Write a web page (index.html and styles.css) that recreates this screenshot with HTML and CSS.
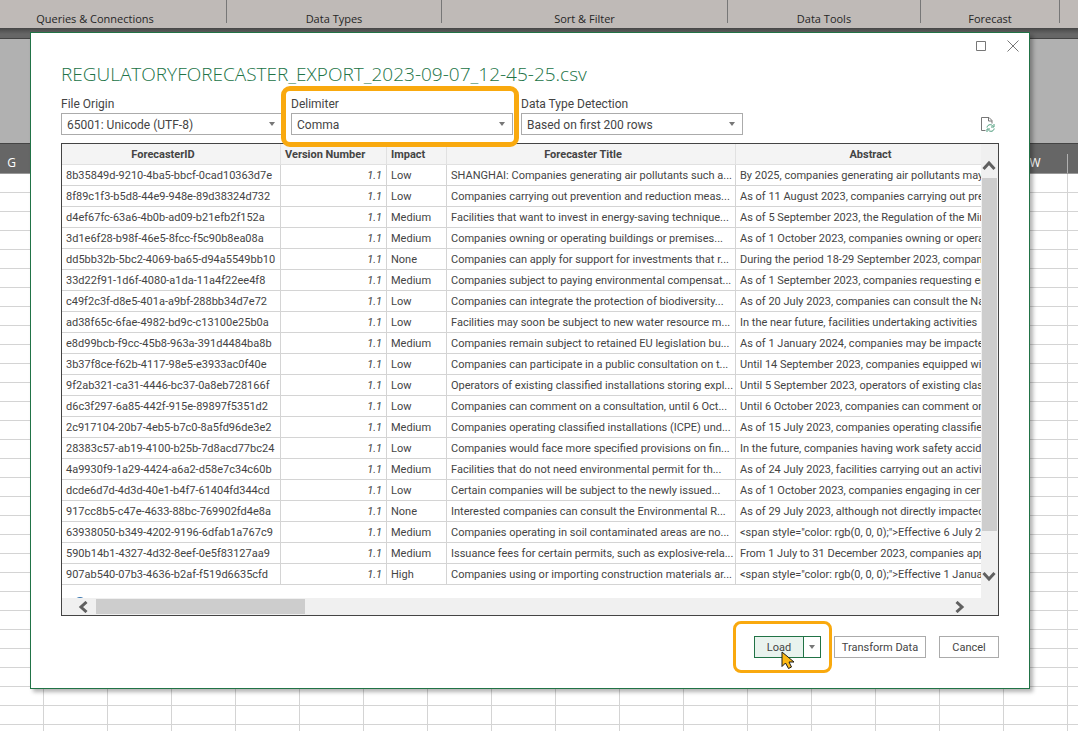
FILE: index.html
```html
<!DOCTYPE html>
<html lang="en">
<head>
  <meta charset="UTF-8">
  <title>CSV Import</title>
  <link rel="stylesheet" href="styles.css">
</head>
<body>
  <div class="workbook">
    <div class="ribbon">
      <div class="ribbon-group queries">Queries &amp; Connections</div>
      <div class="ribbon-group types">Data Types</div>
      <div class="ribbon-group sort">Sort &amp; Filter</div>
      <div class="ribbon-group tools">Data Tools</div>
      <div class="ribbon-group forecast">Forecast</div>
    </div>
    <div class="ribbon-edge"></div>
    <div class="formula-area"></div>
    <div class="column-heads">
      <span class="column-head first">G</span>
      <span class="column-head last">W</span>
    </div>
    <div class="cells"></div>
  </div>

  <main class="dialog">
    <div class="window-buttons">
      <button type="button" aria-label="Maximize">
        <svg width="12" height="12" viewBox="0 0 12 12"><path d="M1.500 1.500h9v9h-9z"/></svg>
      </button>
      <button type="button" aria-label="Close">
        <svg width="12" height="12" viewBox="0 0 12 12"><path d="M.5.5l11 11M11.500.5l-11 11"/></svg>
      </button>
    </div>

    <h1>REGULATORYFORECASTER_EXPORT_2023-09-07_12-45-25.csv</h1>

    <div class="options">
      <div class="field">
        <label for="origin">File Origin</label>
        <div class="select-box">
          <select id="origin"><option>65001: Unicode (UTF-8)</option></select>
        </div>
      </div>
      <div class="field highlighted">
        <label for="delimiter">Delimiter</label>
        <div class="select-box">
          <select id="delimiter"><option>Comma</option></select>
        </div>
      </div>
      <div class="field">
        <label for="detection">Data Type Detection</label>
        <div class="select-box">
          <select id="detection"><option>Based on first 200 rows</option></select>
        </div>
      </div>
      <button type="button" class="refresh" aria-label="Refresh preview">
        <svg width="16" height="17" viewBox="0 0 16 17">
          <path class="page" d="M5.500 14.500h-4V1.500h7.500l3 3v3M8.500 1.500v3.500h3.500"/>
          <path class="arrows" d="M7 11.500c.5-2 1.500-2.800 3.300-2.800 1.200 0 2 .5 2.700 1.500M14 8v3h-3M14.200 12.500c-.5 2-1.500 2.800-3.300 2.800-1.200 0-2-.5-2.700-1.500M7 16v-3h3"/>
        </svg>
      </button>
    </div>

    <div class="preview">
      <div class="table-view">
        <table>
          <colgroup>
            <col class="col-id"><col class="col-version"><col class="col-impact"><col class="col-title"><col>
          </colgroup>
          <thead>
            <tr><th>ForecasterID</th><th class="left">Version Number</th><th class="left">Impact</th><th>Forecaster Title</th><th class="abstract">Abstract</th></tr>
          </thead>
          <tbody>
            <tr><td>8b35849d-9210-4ba5-bbcf-0cad10363d7e</td><td class="num">1.1</td><td>Low</td><td>SHANGHAI: Companies generating air pollutants such a...</td><td>By 2025, companies generating air pollutants may</td></tr>
            <tr><td>8f89c1f3-b5d8-44e9-948e-89d38324d732</td><td class="num">1.1</td><td>Low</td><td>Companies carrying out prevention and reduction meas...</td><td>As of 11 August 2023, companies carrying out prevention</td></tr>
            <tr><td>d4ef67fc-63a6-4b0b-ad09-b21efb2f152a</td><td class="num">1.1</td><td>Medium</td><td>Facilities that want to invest in energy-saving technique...</td><td>As of 5 September 2023, the Regulation of the Ministry</td></tr>
            <tr><td>3d1e6f28-b98f-46e5-8fcc-f5c90b8ea08a</td><td class="num">1.1</td><td>Medium</td><td>Companies owning or operating buildings or premises...</td><td>As of 1 October 2023, companies owning or operating</td></tr>
            <tr><td>dd5bb32b-5bc2-4069-ba65-d94a5549bb10</td><td class="num">1.1</td><td>None</td><td>Companies can apply for support for investments that r...</td><td>During the period 18-29 September 2023, companies</td></tr>
            <tr><td>33d22f91-1d6f-4080-a1da-11a4f22ee4f8</td><td class="num">1.1</td><td>Medium</td><td>Companies subject to paying environmental compensat...</td><td>As of 1 September 2023, companies requesting environmental</td></tr>
            <tr><td>c49f2c3f-d8e5-401a-a9bf-288bb34d7e72</td><td class="num">1.1</td><td>Low</td><td>Companies can integrate the protection of biodiversity...</td><td>As of 20 July 2023, companies can consult the National</td></tr>
            <tr><td>ad38f65c-6fae-4982-bd9c-c13100e25b0a</td><td class="num">1.1</td><td>Low</td><td>Facilities may soon be subject to new water resource m...</td><td>In the near future, facilities undertaking activities</td></tr>
            <tr><td>e8d99bcb-f9cc-45b8-963a-391d4484ba8b</td><td class="num">1.1</td><td>Medium</td><td>Companies remain subject to retained EU legislation bu...</td><td>As of 1 January 2024, companies may be impacted</td></tr>
            <tr><td>3b37f8ce-f62b-4117-98e5-e3933ac0f40e</td><td class="num">1.1</td><td>Low</td><td>Companies can participate in a public consultation on t...</td><td>Until 14 September 2023, companies equipped with</td></tr>
            <tr><td>9f2ab321-ca31-4446-bc37-0a8eb728166f</td><td class="num">1.1</td><td>Low</td><td>Operators of existing classified installations storing expl...</td><td>Until 5 September 2023, operators of existing classified</td></tr>
            <tr><td>d6c3f297-6a85-442f-915e-89897f5351d2</td><td class="num">1.1</td><td>Low</td><td>Companies can comment on a consultation, until 6 Oct...</td><td>Until 6 October 2023, companies can comment on</td></tr>
            <tr><td>2c917104-20b7-4eb5-b7c0-8a5fd96de3e2</td><td class="num">1.1</td><td>Medium</td><td>Companies operating classified installations (ICPE) und...</td><td>As of 15 July 2023, companies operating classified</td></tr>
            <tr><td>28383c57-ab19-4100-b25b-7d8acd77bc24</td><td class="num">1.1</td><td>Low</td><td>Companies would face more specified provisions on fin...</td><td>In the future, companies having work safety accidents</td></tr>
            <tr><td>4a9930f9-1a29-4424-a6a2-d58e7c34c60b</td><td class="num">1.1</td><td>Medium</td><td>Facilities that do not need environmental permit for th...</td><td>As of 24 July 2023, facilities carrying out an activity</td></tr>
            <tr><td>dcde6d7d-4d3d-40e1-b4f7-61404fd344cd</td><td class="num">1.1</td><td>Low</td><td>Certain companies will be subject to the newly issued...</td><td>As of 1 October 2023, companies engaging in certain</td></tr>
            <tr><td>917cc8b5-c47e-4633-88bc-769902fd4e8a</td><td class="num">1.1</td><td>None</td><td>Interested companies can consult the Environmental R...</td><td>As of 29 July 2023, although not directly impacted</td></tr>
            <tr><td>63938050-b349-4202-9196-6dfab1a767c9</td><td class="num">1.1</td><td>Medium</td><td>Companies operating in soil contaminated areas are no...</td><td>&lt;span style="color: rgb(0, 0, 0);"&gt;Effective 6 July 2023</td></tr>
            <tr><td>590b14b1-4327-4d32-8eef-0e5f83127aa9</td><td class="num">1.1</td><td>Medium</td><td>Issuance fees for certain permits, such as explosive-rela...</td><td>From 1 July to 31 December 2023, companies applying</td></tr>
            <tr><td>907ab540-07b3-4636-b2af-f519d6635cfd</td><td class="num">1.1</td><td>High</td><td>Companies using or importing construction materials ar...</td><td>&lt;span style="color: rgb(0, 0, 0);"&gt;Effective 1 January</td></tr>
          </tbody>
        </table>
        <div class="info-peek"></div>
      </div>

      <div class="scroll-v">
        <button type="button" aria-label="Scroll up">
          <svg width="14" height="11" viewBox="0 0 14 11"><path d="M1.500 9L7 3l5.500 6"/></svg>
        </button>
        <div class="thumb"></div>
        <button type="button" aria-label="Scroll down">
          <svg width="14" height="11" viewBox="0 0 14 11"><path d="M1.500 2L7 8l5.500-6"/></svg>
        </button>
      </div>

      <div class="scroll-h">
        <button type="button" aria-label="Scroll left">
          <svg width="10" height="12" viewBox="0 0 10 12"><path d="M8.500 1L3 6l5.500 5"/></svg>
        </button>
        <div class="thumb"></div>
        <button type="button" aria-label="Scroll right">
          <svg width="10" height="12" viewBox="0 0 10 12"><path d="M1.500 1L7 6l-5.500 5"/></svg>
        </button>
      </div>
    </div>

    <div class="actions">
      <div class="split-button">
        <button type="button" class="load">Load</button>
        <button type="button" class="load-menu" aria-label="Load options"></button>
        <svg class="pointer" width="15" height="19" viewBox="0 0 15 19">
          <path d="M1 1v14.500l3.500-3.500 3 5.500 3-1.500-2.500-5H13z"/>
        </svg>
      </div>
      <button type="button" class="transform">Transform Data</button>
      <button type="button" class="cancel">Cancel</button>
    </div>
  </main>
</body>
</html>
```
FILE: styles.css
```css
* {
  box-sizing: border-box;
}
body {
  margin: 0;
  font-family: "Open Sans", "Noto Sans", sans-serif;
  font-size: 11px;
  color: #444;
  background: #fff;
}
button {
  padding: 0;
  font: inherit;
  color: inherit;
  background: #fff;
  border: 1px solid #ababab;
}

/* Spreadsheet behind the dialog */
.workbook {
  display: flex;
  flex-direction: column;
  height: 100vh;
  overflow: hidden;
}
.ribbon {
  display: flex;
  flex: none;
  height: 28px;
  padding-bottom: 5px;
  background: #bfbab7;
}
.ribbon-group {
  flex: none;
  padding-top: 11px;
  line-height: 16px;
  text-align: center;
  color: #262626;
  border-right: 1px solid #777;
}
.queries {
  width: 227px;
  padding-right: 36px;
}
.types {
  width: 215px;
}
.sort {
  width: 286px;
}
.tools {
  width: 193px;
}
.forecast {
  width: 139px;
}
.ribbon-edge {
  flex: none;
  height: 11px;
  background: linear-gradient(#464646, #666 6px);
  border-bottom: 1px solid #444;
}
.formula-area {
  flex: none;
  height: 104px;
  background: #b1b1b1;
}
.column-heads {
  display: flex;
  flex: none;
  justify-content: space-between;
  align-items: flex-end;
  height: 31px;
  padding-right: 10px;
  background: #666;
  border-top: 1px solid #444;
  border-bottom: 1px solid #999;
}
.column-head {
  height: 19px;
  font-size: 12px;
  line-height: 18px;
  text-align: center;
  color: #fff;
}
.first {
  width: 23px;
}
.last {
  width: 65px;
  border-right: 1px solid #b1b1b1;
}
.cells {
  flex: 1;
  background-image:
    linear-gradient(#d4d4d4 1px, transparent 1px),
    linear-gradient(90deg, #d4d4d4 1px, transparent 1px);
  background-size: 64px 19px;
  background-position: 43px 18px;
}

/* Import dialog */
.dialog {
  position: absolute;
  top: 32px;
  left: 30px;
  right: 48px;
  padding: 0 30px 30px;
  font-family: Roboto, "Open Sans", sans-serif;
  background: #fff;
  border: 1px solid #217346;
  box-shadow: 3px 3px 4px rgba(0, 0, 0, 0.3);
}
.window-buttons {
  display: flex;
  justify-content: flex-end;
  gap: 20px;
  height: 28px;
  margin-right: -20px;
  padding-top: 7px;
}
.window-buttons button {
  width: 12px;
  height: 12px;
  border: 0;
}
.window-buttons svg {
  display: block;
  fill: none;
  stroke: #777;
}
h1 {
  margin: 0;
  font-family: "Open Sans", sans-serif;
  font-size: 19px;
  font-weight: 300;
  line-height: 26px;
  white-space: nowrap;
  color: #217346;
}
.options {
  display: flex;
  gap: 8px;
  margin-top: 9px;
}
.field {
  position: relative;
  width: 222px;
}
.field label {
  display: block;
  font-size: 12px;
  line-height: 16px;
}
.highlighted::after {
  content: "";
  position: absolute;
  inset: -10px -6px -12px -10px;
  border: 5px solid #f9a90e;
  border-radius: 9px;
  pointer-events: none;
  z-index: 1;
}
.select-box {
  position: relative;
  margin-top: 1px;
}
.select-box::after {
  content: "";
  position: absolute;
  top: 9px;
  right: 8px;
  border: 3px solid transparent;
  border-top: 4px solid #777;
  border-bottom: 0;
  pointer-events: none;
}
select {
  display: block;
  appearance: none;
  width: 100%;
  height: 22px;
  padding: 1px 5px 0;
  font: inherit;
  font-size: 12px;
  color: inherit;
  background: #fff;
  border: 1px solid #ababab;
  border-radius: 0;
}
.refresh {
  align-self: flex-end;
  margin: 0 3px 2px auto;
  border: 0;
}
.refresh svg {
  display: block;
  fill: none;
}
.page {
  stroke: #777;
}
.arrows {
  stroke: #4c9c7c;
}

.preview {
  display: grid;
  grid-template-columns: 1fr 17px;
  grid-template-rows: auto 17px;
  margin-top: 8px;
  background: #f0f0f0;
  border: 1px solid #444;
}
.table-view {
  position: relative;
  min-width: 0;
  padding-bottom: 13px;
  overflow: hidden;
  background: #fff;
}
table {
  width: 100%;
  table-layout: fixed;
  border-collapse: separate;
  border-spacing: 0;
}
.col-id {
  width: 219px;
}
.col-version {
  width: 106px;
}
.col-impact {
  width: 60px;
}
.col-title {
  width: 289px;
}
th, td {
  height: 21px;
  padding: 2px 4px 0;
  line-height: 18px;
  text-align: left;
  white-space: nowrap;
  overflow: hidden;
  border-right: 1px solid #d4d4d4;
  border-bottom: 1px solid #d4d4d4;
}
th {
  padding-right: 20px;
  font-weight: 700;
  text-align: center;
  background: #f4f4f4;
  border-color: #e1e1e1;
}
th.left {
  padding-right: 4px;
  text-align: left;
}
th.abstract {
  padding-left: 24px;
}
th:last-child, td:last-child {
  padding-right: 0;
  border-right: 0;
}
.num {
  font-style: italic;
  text-align: right;
}
/* Top of the notice icon scrolled out of view */
.info-peek {
  position: absolute;
  left: 12px;
  bottom: -11px;
  width: 12px;
  height: 12px;
  border-radius: 50%;
  background: #3b78b0;
}
.scroll-v, .scroll-h {
  display: flex;
}
.scroll-v {
  flex-direction: column;
  align-items: center;
  padding: 16px 1px 16px 0;
}
.scroll-h {
  align-items: center;
  padding: 0 16px;
}
.scroll-v button, .scroll-h button {
  flex: none;
  background: none;
  border: 0;
}
.preview svg {
  display: block;
  fill: none;
  stroke: #606060;
  stroke-width: 3;
}
.scroll-v .thumb {
  width: 15px;
  height: 353px;
  margin: 7px 0 auto;
  background: #cdcdcd;
}
.scroll-h .thumb {
  width: 209px;
  height: 15px;
  margin: 0 auto 0 8px;
  background: #cdcdcd;
}

.actions {
  display: flex;
  justify-content: flex-end;
  gap: 13px;
  margin-top: 20px;
}
.actions button {
  height: 22px;
}
.split-button {
  position: relative;
  display: flex;
}
.split-button::after {
  content: "";
  position: absolute;
  inset: -15px -11px -15px -21px;
  border: 3px solid #f9a90e;
  border-radius: 8px;
  pointer-events: none;
}
.actions .load {
  width: 50px;
  background: #e9f3ee;
  border-color: #217346;
}
.actions .load-menu {
  width: 17px;
  border-color: #217346;
  border-left: 0;
}
.load-menu::before {
  content: "";
  display: block;
  width: 0;
  margin: 0 auto;
  border: 3px solid transparent;
  border-top: 4px solid #777;
  border-bottom: 0;
}
.pointer {
  position: absolute;
  left: 27px;
  top: 15px;
  fill: #fdb813;
  stroke: #1a1a1a;
  z-index: 1;
}
.transform {
  width: 92px;
}
.cancel {
  width: 60px;
}
```
